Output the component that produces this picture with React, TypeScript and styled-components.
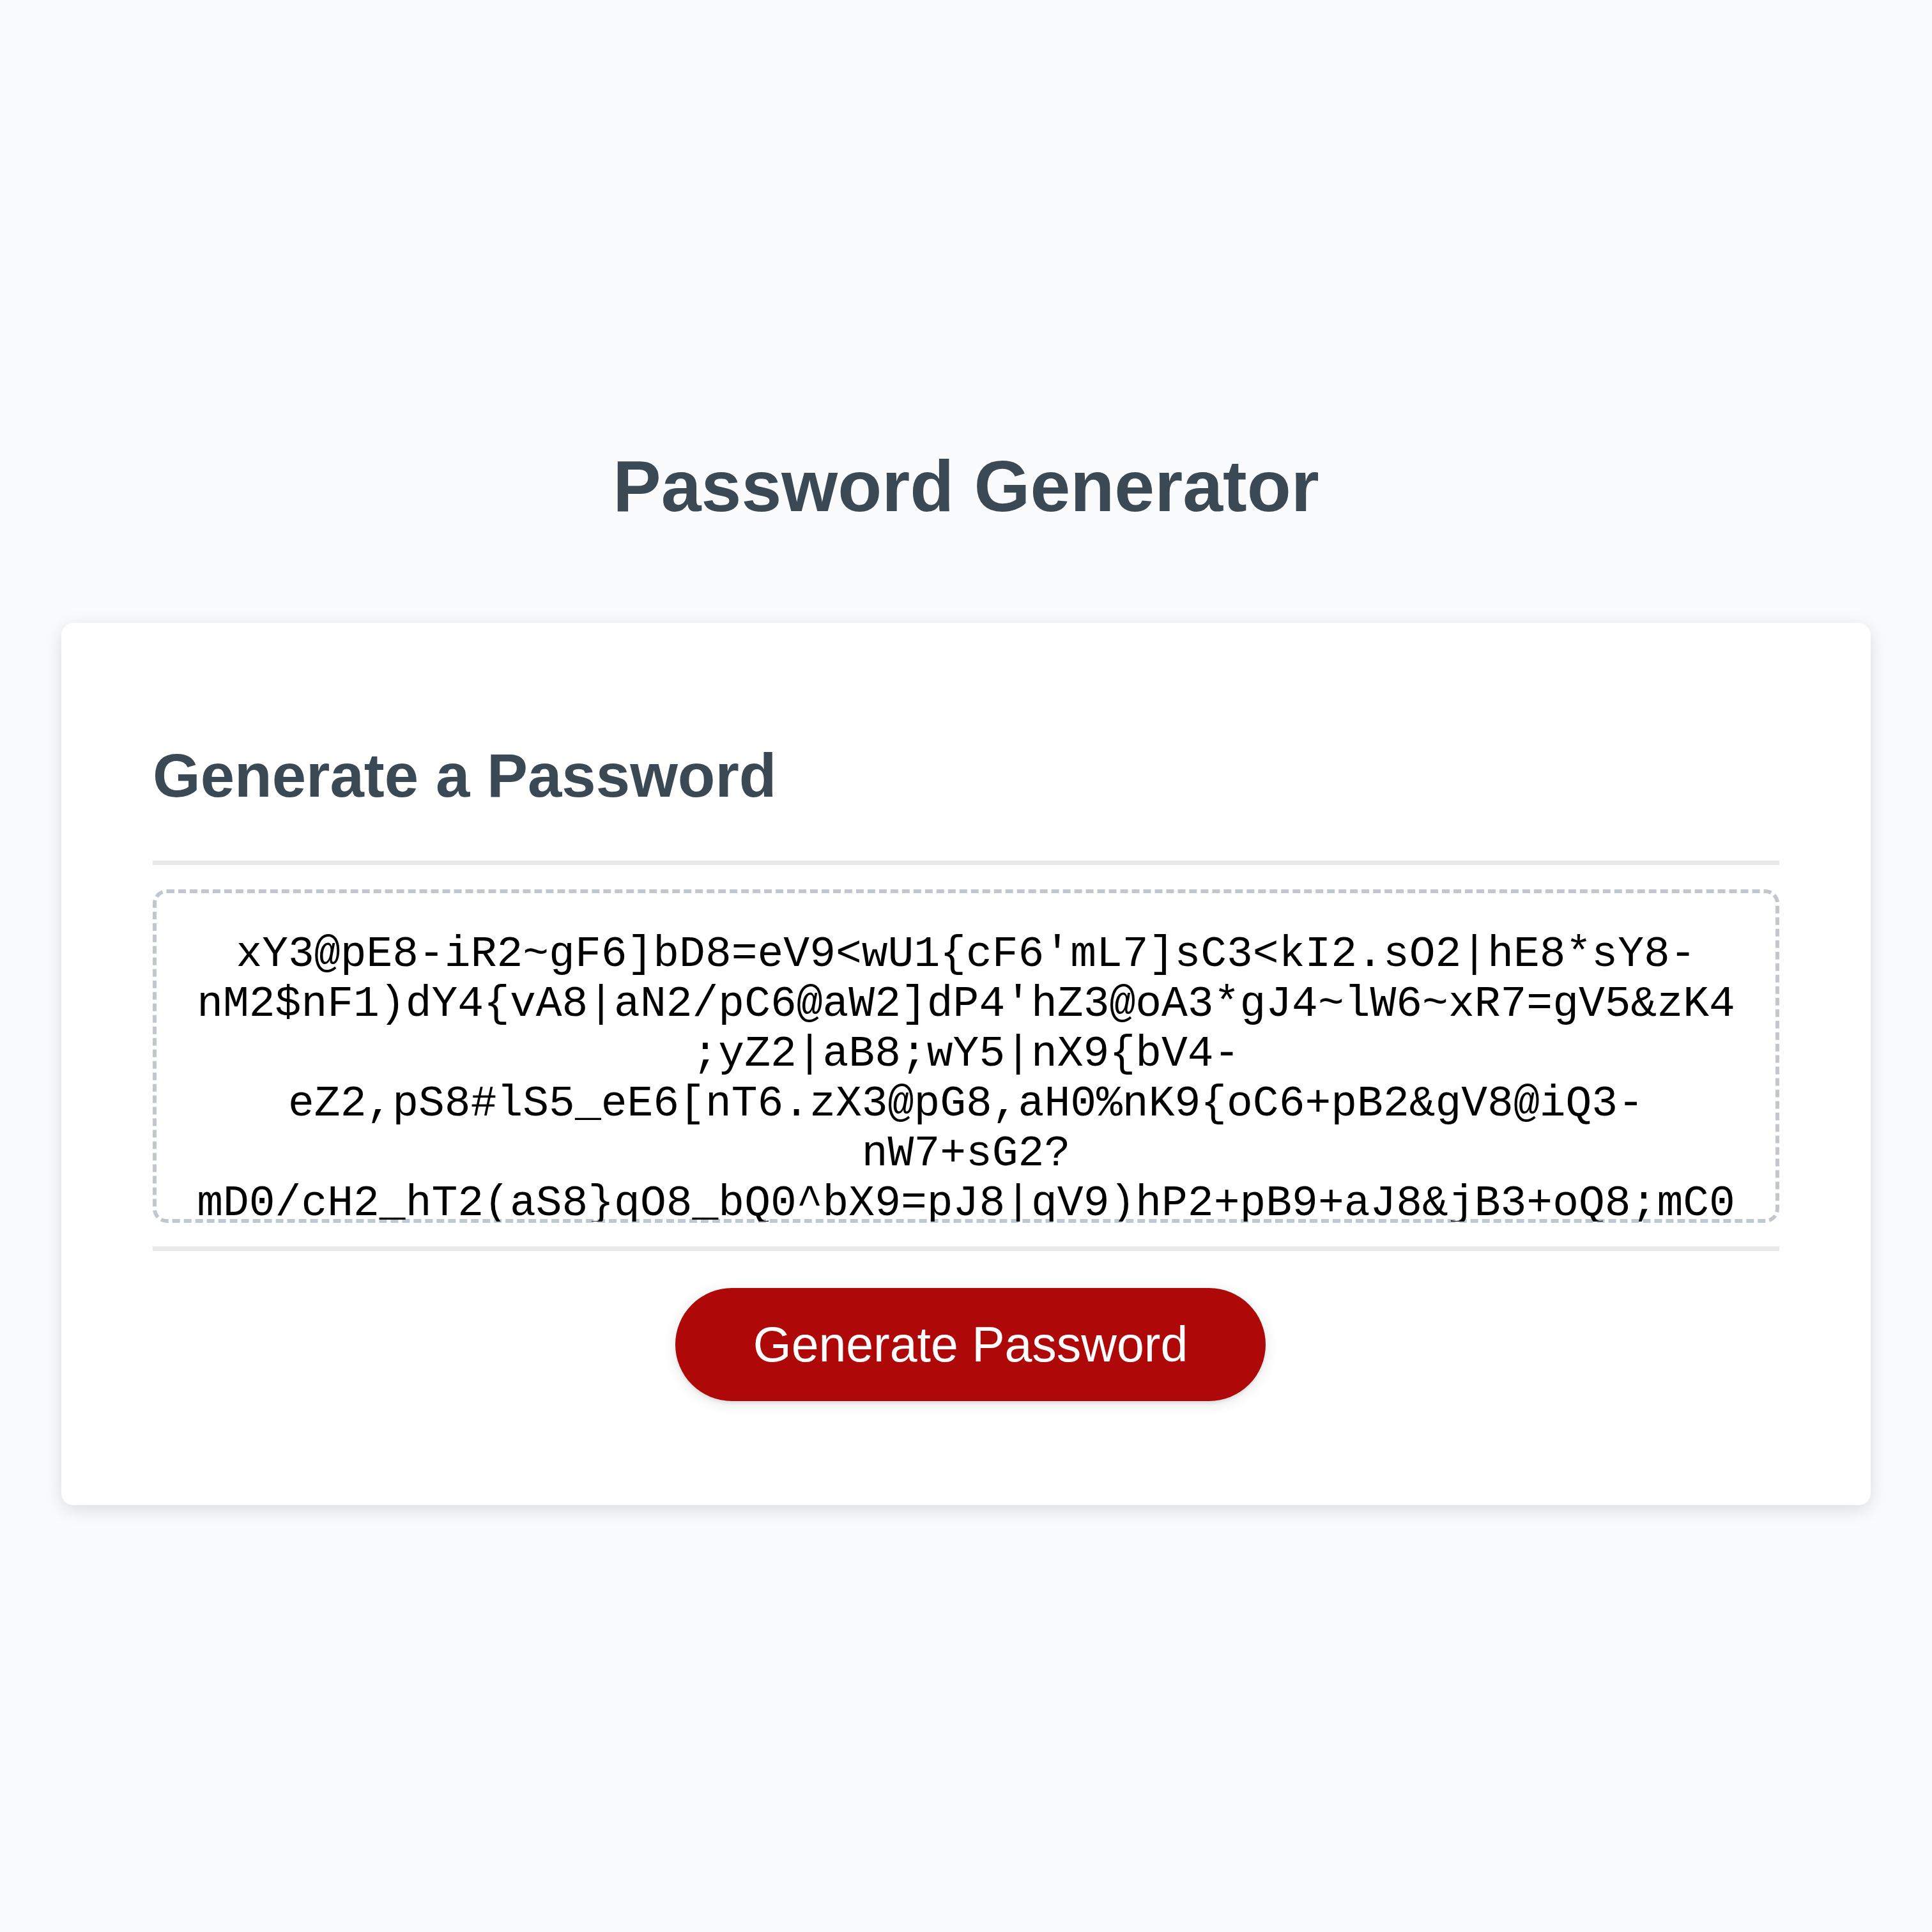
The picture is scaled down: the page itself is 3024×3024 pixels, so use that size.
import React from "react";
import styled, { createGlobalStyle } from "styled-components";

const GlobalStyle = createGlobalStyle`
  *, *::before, *::after { box-sizing: border-box; }
  html, body {
    margin: 0;
    padding: 0;
    background: #f9fbfd;
  }
  body {
    font-family: "Liberation Sans", Arial, Helvetica, sans-serif;
    min-height: 3024px;
  }
`;

const Page = styled.div`
  padding: 695px 0 0;
  min-height: 3024px;
  background: #f9fbfd;
`;

const Header = styled.header`
  text-align: center;
  margin-bottom: 148px;
  color: #3b4954;
`;

const Title = styled.h1`
  margin: 0;
  font-size: 113px;
  line-height: 132px;
  font-weight: 700;
  letter-spacing: 0;
`;

const Card = styled.main`
  width: 2832px;
  margin: 0 auto;
  background: #ffffff;
  border-radius: 19px;
  box-shadow: 0 7px 29px rgba(0, 0, 0, 0.13);
  color: #3b4954;
  padding: 183px 143px 105px;
`;

const CardHeader = styled.div`
  display: flex;
  flex-direction: column;
`;

const CardTitle = styled.h2`
  margin: 0 0 77px;
  font-size: 96px;
  line-height: 112px;
  font-weight: 700;
`;

const Divider = styled.div`
  height: 7px;
  background: #e7e9eb;
`;

const CardBody = styled.div`
  padding: 38px 0 37px;
`;

const PasswordBox = styled.div`
  height: 522px;
  border: 6px dashed #c0c7cf;
  border-radius: 22px;
  padding: 57px 54px 0;
  background: #ffffff;
  color: #000000;
  font-family: "Liberation Mono", "Courier New", Courier, monospace;
  font-size: 68px;
  text-align: center;
`;

const PasswordLines = styled.div`
  height: 457px;
  overflow: hidden;
`;

const PasswordLine = styled.div`
  white-space: pre;
  line-height: 78px;
  height: 78px;
`;

const CardFooter = styled.footer`
  display: flex;
  flex-direction: column;
  align-items: stretch;
`;

const ButtonRow = styled.div`
  display: flex;
  justify-content: center;
  padding: 58px 0 58px 14px;
`;

const GenerateButton = styled.button`
  border: none;
  background-color: #af0808;
  border-radius: 90px;
  box-shadow: 0 4px 22px rgba(0, 0, 0, 0.1), 0 4px 4px rgba(0, 0, 0, 0.06);
  color: #ffffff;
  font-family: "Liberation Sans", Arial, Helvetica, sans-serif;
  font-size: 77px;
  line-height: 79px;
  padding: 49px 122px;
  cursor: pointer;
`;

const passwordLines = [
  "xY3@pE8-iR2~gF6]bD8=eV9<wU1{cF6'mL7]sC3<kI2.sO2|hE8*sY8-",
  "nM2$nF1)dY4{vA8|aN2/pC6@aW2]dP4'hZ3@oA3*gJ4~lW6~xR7=gV5&zK4",
  ";yZ2|aB8;wY5|nX9{bV4-",
  "eZ2,pS8#lS5_eE6[nT6.zX3@pG8,aH0%nK9{oC6+pB2&gV8@iQ3-",
  "nW7+sG2?",
  "mD0/cH2_hT2(aS8}qO8_bQ0^bX9=pJ8|qV9)hP2+pB9+aJ8&jB3+oQ8;mC0",
];

export default function App() {
  return (
    <>
      <GlobalStyle />
      <Page>
        <Header>
          <Title>Password Generator</Title>
        </Header>
        <Card>
          <CardHeader>
            <CardTitle>Generate a Password</CardTitle>
            <Divider />
          </CardHeader>
          <CardBody>
            <PasswordBox role="textbox" aria-readonly="true" aria-label="Generated Password">
              <PasswordLines>
                {passwordLines.map((line, i) => (
                  <PasswordLine key={i}>{line}</PasswordLine>
                ))}
              </PasswordLines>
            </PasswordBox>
          </CardBody>
          <CardFooter>
            <Divider />
            <ButtonRow>
              <GenerateButton type="button">Generate Password</GenerateButton>
            </ButtonRow>
          </CardFooter>
        </Card>
      </Page>
    </>
  );
}
